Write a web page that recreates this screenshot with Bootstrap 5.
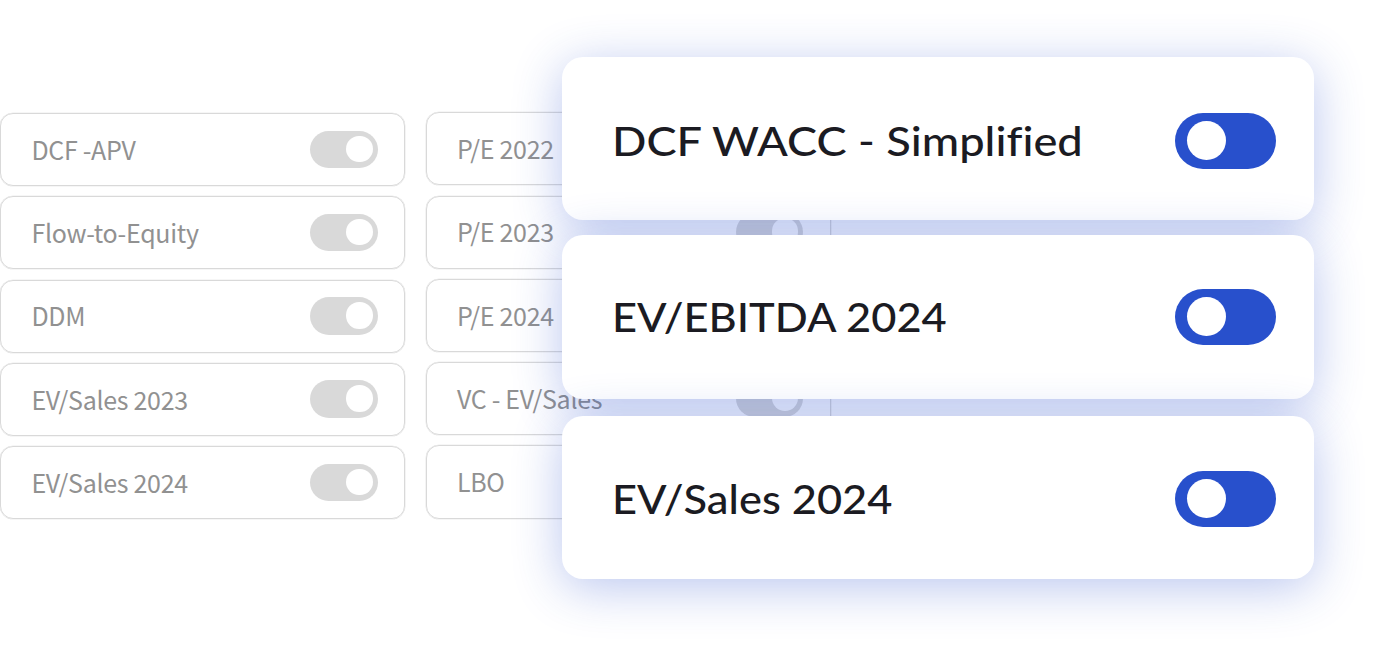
<!DOCTYPE html>
<html lang="en">
<head>
  <meta charset="UTF-8">
  <meta name="viewport" content="width=device-width, initial-scale=1.0">
  <title>Valuation Methods</title>
  <link href="https://cdn.jsdelivr.net/npm/bootstrap@5.3.2/dist/css/bootstrap.min.css" rel="stylesheet">
  <style>
    body {
      background-color: #fff;
      font-family: "Noto Sans CJK SC", "Noto Sans", sans-serif;
    }
    .stage {
      height: 654px;
    }
    .methods {
      gap: 20.5px;
      padding-top: 112.3px;
    }
    .method-list {
      width: 405px;
      gap: 10.1px;
    }
    .method-list:first-child {
      padding-top: .7px;
    }
    .method {
      height: 73.2px;
      padding: 0 26.5px .6px 30.4px;
      border: 1.3px solid #d9d9d9;
      border-radius: 13px;
      box-shadow: 0 0 0 .3px #d9d9d9;
      color: #919191;
      font-size: 25px;
      letter-spacing: -.3px;
      line-height: 1;
    }
    .switch-off {
      width: 67.5px;
      height: 37.4px;
      padding-right: 5px;
      border-radius: 19px;
      background-color: #d9d9d9;
    }
    .switch-off span {
      width: 26.4px;
      height: 26.4px;
      margin-bottom: 1px;
    }
    .picked {
      left: 562px;
      top: 56.7px;
      width: 752px;
    }
    .picked-card {
      height: 163.5px;
      padding: 5px 38.3px 0 50px;
      border: 0;
      border-radius: 21px;
      color: #1b1b22;
      font-family: Lato, sans-serif;
      font-weight: 500;
      font-size: 40px;
      font-variant-ligatures: none;
      line-height: 1;
      box-shadow: 0 8.5px 49px rgba(39, 79, 204, .32);
    }
    .picked-card .label-text {
      padding-top: 1px;
      transform-origin: left center;
      transform: scaleX(1.085);
    }
    .picked-card .label-wide {
      transform: scaleX(1.131);
    }
    .switch-on {
      width: 100.7px;
      height: 55.7px;
      padding-left: 12px;
      border-radius: 28px;
      background-color: #2850cc;
    }
    .switch-on span {
      width: 38.8px;
      height: 38.8px;
      margin-bottom: 1.2px;
    }
  </style>
</head>
<body>

  <div class="stage position-relative overflow-hidden">
    <div class="methods d-flex">
      <div class="method-list d-flex flex-column">
        <div class="method d-flex align-items-center justify-content-between">DCF -APV <div class="switch-off d-flex align-items-center justify-content-end"><span class="bg-white rounded-circle"></span></div></div>
        <div class="method d-flex align-items-center justify-content-between">Flow-to-Equity <div class="switch-off d-flex align-items-center justify-content-end"><span class="bg-white rounded-circle"></span></div></div>
        <div class="method d-flex align-items-center justify-content-between">DDM <div class="switch-off d-flex align-items-center justify-content-end"><span class="bg-white rounded-circle"></span></div></div>
        <div class="method d-flex align-items-center justify-content-between">EV/Sales 2023 <div class="switch-off d-flex align-items-center justify-content-end"><span class="bg-white rounded-circle"></span></div></div>
        <div class="method d-flex align-items-center justify-content-between">EV/Sales 2024 <div class="switch-off d-flex align-items-center justify-content-end"><span class="bg-white rounded-circle"></span></div></div>
      </div>
      <div class="method-list d-flex flex-column">
        <div class="method d-flex align-items-center justify-content-between">P/E 2022 <div class="switch-off d-flex align-items-center justify-content-end"><span class="bg-white rounded-circle"></span></div></div>
        <div class="method d-flex align-items-center justify-content-between">P/E 2023 <div class="switch-off d-flex align-items-center justify-content-end"><span class="bg-white rounded-circle"></span></div></div>
        <div class="method d-flex align-items-center justify-content-between">P/E 2024 <div class="switch-off d-flex align-items-center justify-content-end"><span class="bg-white rounded-circle"></span></div></div>
        <div class="method d-flex align-items-center justify-content-between">VC - EV/Sales <div class="switch-off d-flex align-items-center justify-content-end"><span class="bg-white rounded-circle"></span></div></div>
        <div class="method d-flex align-items-center justify-content-between">LBO <div class="switch-off d-flex align-items-center justify-content-end"><span class="bg-white rounded-circle"></span></div></div>
      </div>
    </div>

    <!-- selected methods float over the list -->
    <div class="picked position-absolute">
      <div class="picked-card card flex-row align-items-center justify-content-between">
        <span class="label-text label-wide">DCF WACC - Simplified</span>
        <div class="switch-on d-flex align-items-center"><span class="bg-white rounded-circle"></span></div>
      </div>
      <div class="picked-card card flex-row align-items-center justify-content-between" style="height: 164px; margin-top: 14.7px; padding-top: 0;">
        <span class="label-text">EV/EBITDA 2024</span>
        <div class="switch-on d-flex align-items-center"><span class="bg-white rounded-circle"></span></div>
      </div>
      <div class="picked-card card flex-row align-items-center justify-content-between" style="margin-top: 16.7px; padding-top: 3px;">
        <span class="label-text">EV/Sales 2024</span>
        <div class="switch-on d-flex align-items-center"><span class="bg-white rounded-circle"></span></div>
      </div>
    </div>
  </div>

  <script src="https://cdn.jsdelivr.net/npm/bootstrap@5.3.2/dist/js/bootstrap.bundle.min.js"></script>
</body>
</html>
